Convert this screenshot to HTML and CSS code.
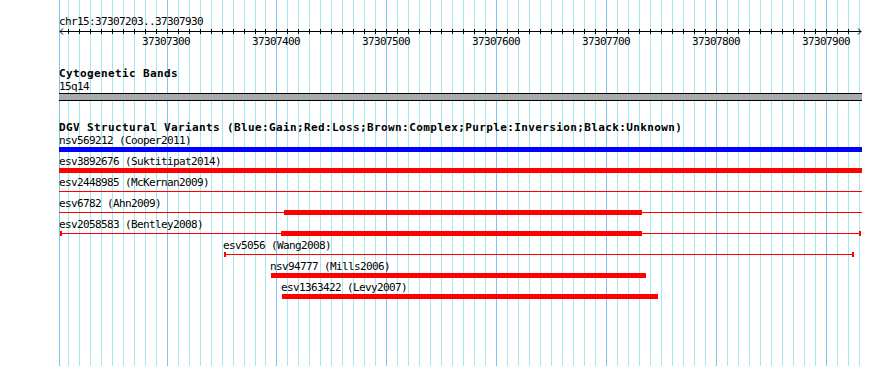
FILE: index.html
```html
<!doctype html>
<html>
<head>
<meta charset="utf-8">
<link rel="stylesheet" href="styles.css">
<title>chr15:37307203..37307930</title>
</head>
<body>
<div class="panel">

<div class="ruler">
	<div class="ruler-name">chr15:37307203..37307930</div>
	<div class="axis">
		<svg class="arrow arrow-left" width="5" height="7" viewBox="0 0 5 7"><polyline points="4,0.5 1,3.5 4,6.5" /></svg>
		<svg class="arrow arrow-right" width="5" height="7" viewBox="0 0 5 7"><polyline points="1,0.5 4,3.5 1,6.5" /></svg>
	</div>
	<div class="ruler-labels">
		<span>37307300</span>
		<span>37307400</span>
		<span>37307500</span>
		<span>37307600</span>
		<span>37307700</span>
		<span>37307800</span>
		<span>37307900</span>
	</div>
</div>

<div class="track track-bands">
	<div class="track-title">Cytogenetic Bands</div>
	<div class="feat-label">15q14</div>
	<div class="band"></div>
</div>

<div class="track track-dgv">
	<div class="track-title">DGV Structural Variants (Blue:Gain;Red:Loss;Brown:Complex;Purple:Inversion;Black:Unknown)</div>

	<div class="feat">
		<div class="feat-label">nsv569212 (Cooper2011)</div>
		<div class="bar gain" style="margin-left:0;width:803px"></div>
	</div>
	<div class="feat">
		<div class="feat-label">esv3892676 (Suktitipat2014)</div>
		<div class="bar loss" style="margin-left:0;width:803px"></div>
	</div>
	<div class="feat">
		<div class="feat-label">esv2448985 (McKernan2009)</div>
		<div class="bar line" style="margin-left:0;width:803px"></div>
	</div>
	<div class="feat">
		<div class="feat-label">esv6782 (Ahn2009)</div>
		<div class="bar line" style="margin-left:0;width:803px">
			<div class="block" style="margin-left:225px;width:358px"></div>
		</div>
	</div>
	<div class="feat">
		<div class="feat-label">esv2058583 (Bentley2008)</div>
		<div class="bar line capped" style="margin-left:1px;width:801px">
			<div class="block" style="margin-left:221px;width:361px"></div>
		</div>
	</div>
	<div class="feat">
		<div class="feat-label" style="padding-left:164px">esv5056 (Wang2008)</div>
		<div class="bar line capped" style="margin-left:165px;width:630px"></div>
	</div>
	<div class="feat">
		<div class="feat-label" style="padding-left:211px">nsv94777 (Mills2006)</div>
		<div class="bar loss" style="margin-left:212px;width:375px"></div>
	</div>
	<div class="feat">
		<div class="feat-label" style="padding-left:222px">esv1363422 (Levy2007)</div>
		<div class="bar loss" style="margin-left:223px;width:376px"></div>
	</div>
</div>

</div>
</body>
</html>
```

FILE: styles.css
```css
html,
body {
    margin: 0;
    padding: 0;
    background-color: white;
}
body {
    font-family: "DejaVu Sans Mono", "Liberation Mono", monospace;
    font-size: 11px;
    letter-spacing: -0.62px;
    color: #000;
    overflow: hidden;
}

/* grid: minor line every 10bp, major every 100bp */
.panel {
    height: 366px;
    box-sizing: border-box;
    padding: 15px 0 0 59px;
    background:
        linear-gradient(#7fc4ec, #7fc4ec) 59px 0 / 1px 100% no-repeat,
        linear-gradient(#7fc4ec, #7fc4ec) 167px 0 / 1px 100% no-repeat,
        repeating-linear-gradient(to right, #7fc4ec 0 1px, transparent 1px 110px) 276px 0 / 551px 100% no-repeat,
        repeating-linear-gradient(to right, #a6e8ef 0 1px, transparent 1px 11px) 68px 0 / 188px 100% no-repeat,
        repeating-linear-gradient(to right, #a6e8ef 0 1px, transparent 1px 11px) 265px 0 / 595px 100% no-repeat;
}

.ruler-name {
    line-height: 13px;
}
.axis {
    position: relative;
    height: 7px;
    width: 801px;
    margin-left: 1px;
    background:
        linear-gradient(#000, #000) 0 3px / 100% 1px no-repeat,
        repeating-linear-gradient(to right, #000 0 1px, transparent 1px 11px) 8px 1px / 188px 5px no-repeat,
        repeating-linear-gradient(to right, #000 0 1px, transparent 1px 11px) 205px 1px / 584px 5px no-repeat;
}
.arrow {
    position: absolute;
    top: 0;
}
.arrow polyline {
    fill: none;
    stroke: #000;
    stroke-width: 1;
}
.arrow-left {
    left: -1px;
}
.arrow-right {
    right: -1px;
}
.ruler-labels {
    display: flex;
    margin-left: 52px;
    line-height: 13px;
}
.ruler-labels span {
    width: 110px;
    text-align: center;
}

.track-title {
    font-weight: bold;
    letter-spacing: 0.38px;
    line-height: 12px;
    white-space: nowrap;
}
.feat-label {
    line-height: 13px;
    white-space: nowrap;
}
.track-bands {
    margin-top: 20px;
}
.band {
    width: 803px;
    height: 6px;
    background-color: #aaaaaa;
    border-top: 1px solid #000;
    border-bottom: 1px solid #000;
}
.track-dgv {
    margin-top: 21px;
}

.feat {
    height: 21px;
}
.bar {
    display: flex;
    height: 5px;
}
.gain {
    background-color: #0000ff;
}
.loss {
    background-color: #ff0000;
}
.line {
    background: linear-gradient(#f00, #f00) 0 2px / 100% 1px no-repeat;
}
.line.capped {
    background:
        linear-gradient(#f00, #f00) left top / 2px 100% no-repeat,
        linear-gradient(#f00, #f00) right top / 2px 100% no-repeat,
        linear-gradient(#f00, #f00) 0 2px / 100% 1px no-repeat;
}
.block {
    height: 100%;
    background-color: #ff0000;
}
```
